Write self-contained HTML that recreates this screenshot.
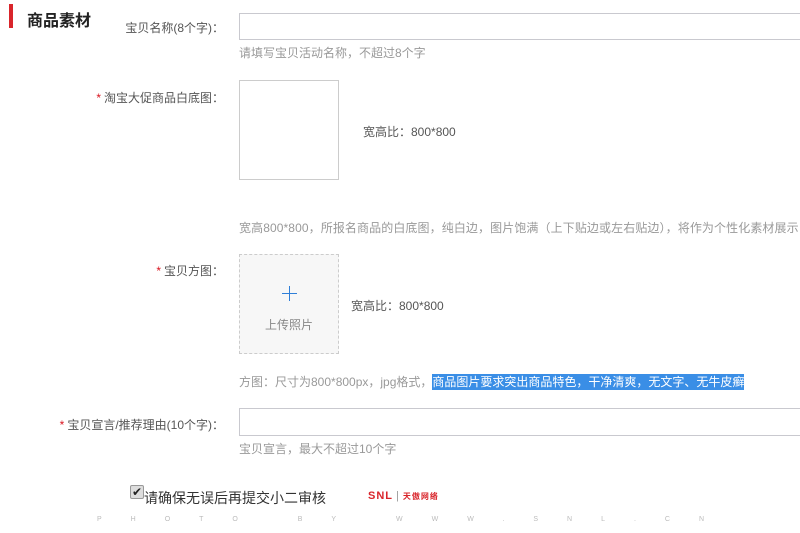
<!DOCTYPE html>
<html><head><meta charset="utf-8"><style>
body{margin:0;width:800px;height:533px;background:#fff;position:relative;overflow:hidden;font-family:"Liberation Sans","Noto Sans CJK SC",sans-serif;font-size:12px;color:#555}
.a{position:absolute;white-space:nowrap}
.lab{position:absolute;text-align:right;right:576px;white-space:nowrap;color:#555}
.st{color:#d9141e;margin-right:3px}
.hint{color:#999}
.inp{position:absolute;left:239px;width:570px;height:26px;border:1px solid #c9c9cf;box-sizing:border-box}
</style></head><body>
<div class="a" style="left:9px;top:4px;width:4px;height:24px;background:#d9252b"></div>
<div class="a" style="left:27px;top:7px;font-size:16px;color:#222;font-weight:bold">商品素材</div>

<div class="lab" style="top:19px">宝贝名称(8个字)：</div>
<div class="inp" style="top:13px;height:27px"></div>
<div class="a hint" style="left:239px;top:44px">请填写宝贝活动名称，不超过8个字</div>

<div class="lab" style="top:89px"><span class="st">*</span>淘宝大促商品白底图：</div>
<div class="a" style="left:239px;top:80px;width:100px;height:100px;border:1px solid #ccc;box-sizing:border-box"></div>
<div class="a" style="left:363px;top:123px">宽高比：800*800</div>
<div class="a hint" style="left:239px;top:219px;letter-spacing:0.1px">宽高800*800，所报名商品的白底图，纯白边，图片饱满（上下贴边或左右贴边），将作为个性化素材展示</div>

<div class="lab" style="top:262px"><span class="st">*</span>宝贝方图：</div>
<div class="a" style="left:239px;top:254px;width:100px;height:100px;border:1px dashed #ccc;box-sizing:border-box;background:#f7f7f7"></div>
<div class="a" style="left:282px;top:293px;width:15px;height:1px;background:#2f7fd8"></div>
<div class="a" style="left:289px;top:286px;width:1px;height:15px;background:#2f7fd8"></div>
<div class="a" style="left:265px;top:316px;color:#888">上传照片</div>
<div class="a" style="left:351px;top:297px">宽高比：800*800</div>
<div class="a hint" style="left:239px;top:373px">方图：尺寸为800*800px，jpg格式，<span style="background:#3a8ee6;color:#fff;padding:1px 0">商品图片要求突出商品特色，干净清爽，无文字、无牛皮癣</span></div>

<div class="lab" style="top:416px"><span class="st">*</span>宝贝宣言/推荐理由(10个字)：</div>
<div class="inp" style="top:408px;height:28px"></div>
<div class="a hint" style="left:239px;top:440px">宝贝宣言，最大不超过10个字</div>

<div class="a" style="left:130px;top:485px;width:12px;height:12px;border:1px solid #999;border-radius:2px;background:#ddd;font-size:12px;line-height:12px;text-align:center;color:#222">✔</div>
<div class="a" style="left:144px;top:488px;font-size:14px;color:#333">请确保无误后再提交小二审核</div>
<div class="a" style="left:368px;top:490px;font-size:11px;font-weight:bold;color:#d9252b;letter-spacing:1px">SNL<span style="color:#999;font-weight:normal;margin:0 3px">|</span><span style="font-size:8px">天傲网络</span></div>
<div class="a" style="left:97px;top:516px;font-size:7px;color:#bbb;letter-spacing:29px">PHOTO&nbsp;BY&nbsp;WWW.SNL.CN</div>
</body></html>
